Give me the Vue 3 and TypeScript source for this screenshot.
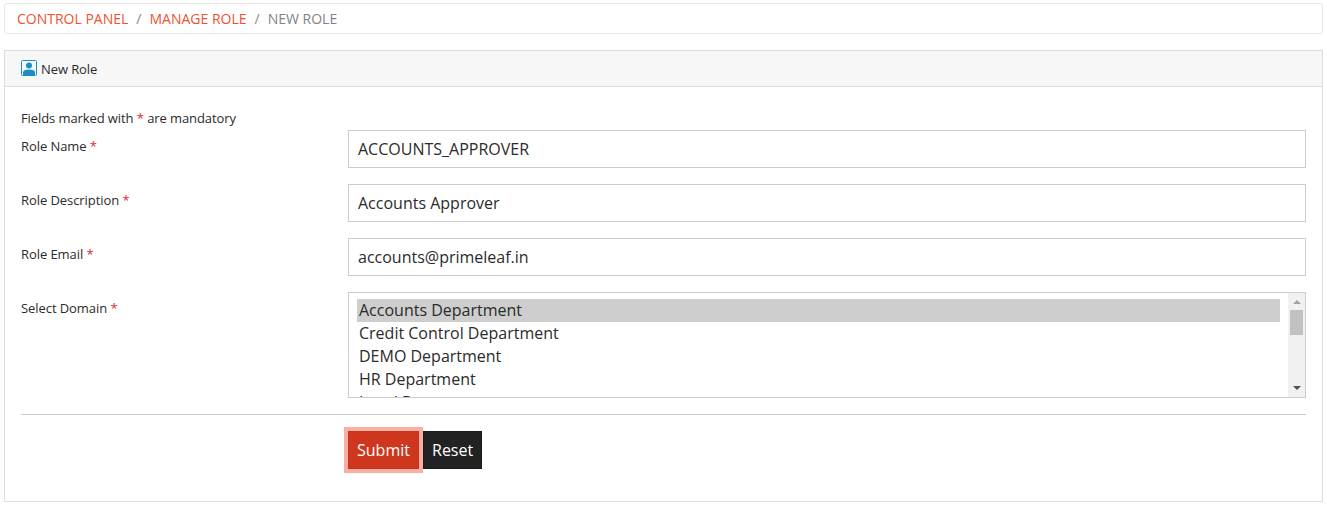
<script setup lang="ts">
const crumbs: string[] = ['CONTROL PANEL', 'MANAGE ROLE'];
const domains: string[] = ['Accounts Department', 'Credit Control Department', 'DEMO Department', 'HR Department', 'Legal Department'];
const fields = [
  { label: 'Role Name', value: 'ACCOUNTS_APPROVER' },
  { label: 'Role Description', value: 'Accounts Approver' },
  { label: 'Role Email', value: 'accounts@primeleaf.in' },
];
</script>

<template>
  <div class="page">
    <nav class="crumbs">
      <template v-for="c in crumbs" :key="c">
        <a class="crumb">{{ c }}</a><span class="sep">/</span>
      </template>
      <span class="current">NEW ROLE</span>
    </nav>
    <section class="panel">
      <header class="head">
        <svg class="icon" width="16" height="16" viewBox="0 0 16 16">
          <rect x="0.5" y="0.5" width="15" height="15" rx="1" fill="#f4fafd" stroke="#1a8fc0" />
          <circle cx="8" cy="5.6" r="3" fill="#1a8fc0" />
          <path d="M2 15v-2.5C2 10.5 4 9.5 8 9.5s6 1 6 3V15z" fill="#1a8fc0" />
        </svg>
        <span>New Role</span>
      </header>
      <div class="body">
        <p class="note">Fields marked with <span class="req">*</span> are mandatory</p>
        <div v-for="f in fields" :key="f.label" class="row">
          <label class="label">{{ f.label }} <span class="req">*</span></label>
          <input class="input" type="text" :value="f.value" />
        </div>
        <div class="row">
          <label class="label">Select Domain <span class="req">*</span></label>
          <div class="list">
            <div class="options">
              <div v-for="(d, i) in domains" :key="d" class="option" :class="{ selected: i === 0 }">{{ d }}</div>
            </div>
            <div class="scrollbar">
              <span class="arrow up"></span>
              <span class="thumb"></span>
              <span class="arrow down"></span>
            </div>
          </div>
        </div>
        <hr class="rule" />
        <div class="actions">
          <button class="btn submit" type="button">Submit</button>
          <button class="btn reset" type="button">Reset</button>
        </div>
      </div>
    </section>
  </div>
</template>

<style scoped>
.page {
  width: 1327px;
  height: 508px;
  box-sizing: border-box;
  padding: 3px 4px 0 4px;
  overflow: hidden;
  background: #fff;
  font-family: "Open Sans", "Liberation Sans", sans-serif;
  font-size: 13px;
  color: #2b2b2b;
}
.crumbs {
  height: 31px;
  box-sizing: border-box;
  padding: 0 12px;
  display: flex;
  align-items: center;
  border: 1px solid #e6e6e6;
  border-radius: 3px;
  font-size: 14px;
}
.crumb { color: #f0502f; }
.sep { color: #888; margin: 0 8px; }
.current { color: #808488; }
.panel {
  margin-top: 16px;
  height: 452px;
  box-sizing: border-box;
  border: 1px solid #ddd;
}
.head {
  height: 36px;
  box-sizing: border-box;
  display: flex;
  align-items: center;
  gap: 4px;
  padding-left: 16px;
  background: #f7f7f7;
  border-bottom: 1px solid #ddd;
  font-size: 13px;
  letter-spacing: -0.1px;
}
.icon { flex: none; margin-top: -2px; }
.body { padding: 22px 16px 0; }
.note { margin: 0; height: 21px; line-height: 18px; letter-spacing: -0.09px; }
.req { color: #dc1f35; }
.row {
  display: grid;
  grid-template-columns: 327px 1fr;
  margin-bottom: 16px;
}
.label { line-height: 18px; padding-top: 7px; letter-spacing: -0.07px; }
.input {
  height: 38px;
  box-sizing: border-box;
  width: 100%;
  border: 1px solid #ccc;
  padding: 0 9px;
  font: inherit;
  font-size: 16px;
  color: #2b2b2b;
  outline: none;
}
.list {
  height: 106px;
  box-sizing: border-box;
  border: 1px solid #ccc;
  display: flex;
  overflow: hidden;
}
.options {
  flex: 1;
  padding: 6px 8px 0;
  font-size: 16px;
  color: #2b2b2b;
}
.option { height: 23px; line-height: 23px; padding-left: 2px; white-space: nowrap; }
.selected { background: #cecece; }
.scrollbar {
  width: 17px;
  flex: none;
  background: #f1f1f1;
  display: flex;
  flex-direction: column;
  align-items: center;
  position: relative;
}
.arrow {
  position: absolute;
  width: 0;
  height: 0;
  border-left: 4px solid transparent;
  border-right: 4px solid transparent;
}
.up { top: 7px; border-bottom: 4px solid #a3a3a3; }
.down { bottom: 7px; border-top: 4px solid #505050; }
.thumb {
  position: absolute;
  top: 17px;
  left: 2px;
  width: 13px;
  height: 25px;
  background: #c1c1c1;
}
.rule {
  margin: 0;
  border: 0;
  border-top: 1px solid #ccc;
}
.actions {
  margin: 16px 0 0 327px;
  display: flex;
  gap: 4px;
  align-items: center;
}
.btn {
  height: 38px;
  box-sizing: border-box;
  padding: 0 8px;
  font: inherit;
  font-size: 16px;
  color: #fff;
  border-radius: 0;
}
.submit {
  width: 71px;
  background: #cf361e;
  border: 1px solid #bd3a20;
  box-shadow: 0 0 0 4px #fbaea4;
}
.reset {
  width: 59px;
  background: #222;
  border: 1px solid #1a1a1a;
}
</style>
